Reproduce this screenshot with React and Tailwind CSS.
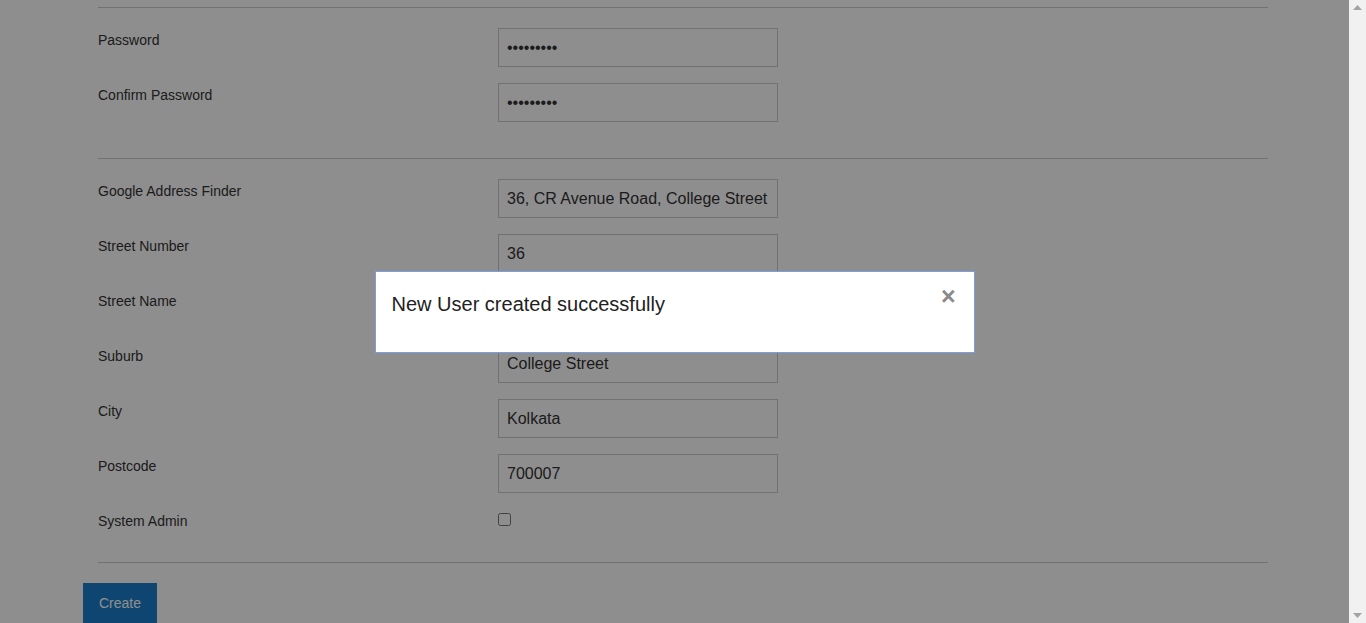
import React from "react";

const font = { fontFamily: '"Liberation Sans", Arial, sans-serif' };

function Row({ label, children }) {
  return (
    <div className="flex h-[39px] mb-4">
      <div className="w-[400px] pt-[2px] text-sm leading-5 text-[#333]">{label}</div>
      <div className="w-[280px]">{children}</div>
    </div>
  );
}

function TextInput({ value, type = "text" }) {
  return (
    <input
      type={type}
      defaultValue={value}
      readOnly
      className="w-[280px] h-[39px] border border-[#ccc] bg-white px-2 text-base text-[#333] outline-none"
      style={font}
    />
  );
}

export default function App() {
  return (
    <div className="flex h-[623px] w-[1366px] overflow-hidden bg-white" style={font}>
      <div className="relative flex-1">
        <div className="ml-[83px] w-[1200px] px-[15px] pt-[7px] flex flex-col">
          <div className="border-t border-[#ccc] mb-5" />
          <Row label="Password"><TextInput type="password" value="123456789" /></Row>
          <Row label="Confirm Password"><TextInput type="password" value="123456789" /></Row>
          <div className="border-t border-[#ccc] mt-5 mb-5" />
          <Row label="Google Address Finder"><TextInput value="36, CR Avenue Road, College Street" /></Row>
          <Row label="Street Number"><TextInput value="36" /></Row>
          <Row label="Street Name"><TextInput value="CR Avenue Road" /></Row>
          <Row label="Suburb"><TextInput value="College Street" /></Row>
          <Row label="City"><TextInput value="Kolkata" /></Row>
          <Row label="Postcode"><TextInput value="700007" /></Row>
          <div className="flex h-[17px] mb-4">
            <div className="w-[400px] pt-[2px] text-sm leading-5 text-[#333]">System Admin</div>
            <div className="pt-1">
              <input type="checkbox" className="block w-[13px] h-[13px]" />
            </div>
          </div>
          <div className="border-t border-[#ccc] mt-5" />
        </div>
        <div className="ml-[83px] mt-5">
          <button className="bg-[#1c7fcc] text-white text-sm leading-5 px-4 py-[10px] h-[40px]" style={font}>
            Create
          </button>
        </div>

        <div className="absolute inset-0 bg-black/[0.443]">
          <div className="flex justify-center pt-[271px]">
            <div className="relative w-[600px] h-[82px] bg-white border border-[#7b9de3] px-4 pt-[18px]">
              <div className="text-[20px] leading-7 text-[#222]">New User created successfully</div>
              <span className="absolute right-[18px] top-[12px] text-[25px] font-bold leading-none text-[#8a8a8a]">×</span>
            </div>
          </div>
        </div>
      </div>

      <div className="w-[17px] bg-[#f1f1f1] flex flex-col justify-between items-center py-[5px]">
        <svg width="9" height="5" viewBox="0 0 9 5"><path d="M0 5 L4.5 0 L9 5 Z" fill="#a3a3a3" /></svg>
        <svg width="9" height="5" viewBox="0 0 9 5"><path d="M0 0 L4.5 5 L9 0 Z" fill="#a3a3a3" /></svg>
      </div>
    </div>
  );
}
